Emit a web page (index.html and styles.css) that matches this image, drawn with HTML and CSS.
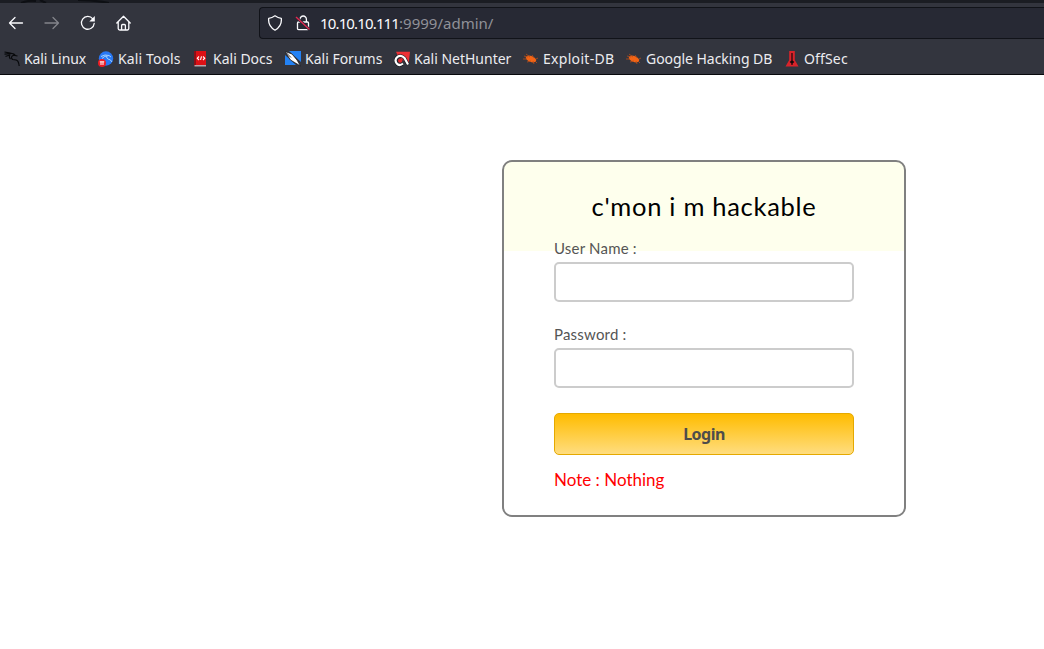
FILE: index.html
```html
<!DOCTYPE html>
<html lang="en">
<head>
<meta charset="utf-8">
<title>Login</title>
<link rel="stylesheet" href="styles.css">
</head>
<body>
<header class="browser">
  <div class="tabstrip"><svg width="130" height="3" viewBox="0 0 130 3"><path d="M21 3Q28 0 36 1M40 0l6 3M78 0q15 0 31 3" stroke="#0d0f13" stroke-width="2" fill="none"/></svg></div>
  <div class="toolbar">
    <nav class="nav">
      <svg viewBox="0 0 16 16"><path d="M14.500 8H1.500M7 2.500L1.500 8 7 13.500" class="line"/></svg>
      <svg viewBox="0 0 16 16" class="dim"><path d="M1 8h13.500M9 2.500L14.500 8 9 13.500" class="line"/></svg>
      <svg viewBox="0 0 16 16"><path d="M12.800 3.800A6.400 6.400 0 1 0 14.200 8.500" class="line"/><path d="M14.800 1v5.500H9.300z" fill="#fbfbfe"/></svg>
      <svg viewBox="0 0 16 16"><path d="M.8 8L7.500 1.200 14.200 8M2.200 7v6.500a1.500 1.500 0 0 0 1.500 1.500h7.600a1.500 1.500 0 0 0 1.500-1.500V7M5.600 15v-4.500q0-1 1-1h1.800q1 0 1 1V15" class="line"/></svg>
    </nav>
    <div class="address">
      <svg viewBox="0 0 16 16"><path d="M8 .8Q11 3 14.300 3.300Q15.200 11 8 15.200Q.8 11 1.700 3.300Q5 3 8 .8z" class="line"/></svg>
      <svg viewBox="0 0 16 16" class="lock"><path d="M5 7V4.200a3.200 3.200 0 0 1 6.400 0V7M3.500 7h9q1 0 1 1v5.500q0 1.200-1.200 1.200H3.700q-1.200 0-1.200-1.200V8q0-1 1-1z" class="line"/><path d="M1 2l13.500 12.500" stroke="#272934" stroke-width="3"/><path d="M1 2l13.500 12.500" stroke="#e22850" stroke-width="1.400"/></svg>
      <span class="url"><span class="host">10.10.10.111</span><span class="path">:9999/admin/</span></span>
    </div>
  </div>
  <div class="bookmarks">
    <div class="bookmark"><svg viewBox="0 0 16 16"><path d="M.5 1l6 1.200M.5 3.200l6-.5M1.500 5.500l4-1.500M6 2.500q4-.5 6 2.500M13.500 5l-4-.8q-3.500 1.800-1 4.300 4.500 0 5.500 2t1.200 4.500M6 3q-1.500 3 .5 5" stroke="#08090b" stroke-width="1.200" fill="none"/></svg><span class="t1">Kali Linux</span></div>
    <div class="bookmark"><svg viewBox="0 0 16 16"><circle cx="8" cy="7.500" r="7.200" fill="#2878f5"/><path d="M3 5.500q4-2.500 8-1l2 1.500M4 7.500q3-3 5-2.500-1 2.500 1 3 3 .5 4 3" stroke="#a4d2ff" stroke-width="1" fill="none"/><circle cx="4" cy="12" r="4" fill="#ed1c24"/><path d="M1.800 10.800h4.400M3 11v3M5 11v3" stroke="#fff" stroke-width="1"/></svg><span class="t2">Kali Tools</span></div>
    <div class="bookmark"><svg viewBox="0 0 16 16"><path d="M1 0h2v15H1z" fill="#8a1017"/><path d="M3 0h10v14H3z" fill="#dc1015"/><path d="M1.500 14.800H13" stroke="#d8c4c8" stroke-width="1.200"/><path d="M6 5.500L4.300 7.200 6 9M8.500 5.300l-1 3.500M10 5.500l1.700 1.700L10 9" stroke="#fff" stroke-width="1.100" fill="none"/></svg><span class="t3">Kali Docs</span></div>
    <div class="bookmark"><svg viewBox="0 0 16 16"><path d="M4 0h12v11zM0 4v10h11z" fill="#2382f5"/><path d="M0 .5L7 3l5 6 3.500 6-5-3-5-3z" fill="#fff" stroke="#111319" stroke-width=".7"/><path d="M1 1.500l5 5" stroke="#111319" stroke-width=".8"/></svg><span class="t4">Kali Forums</span></div>
    <div class="bookmark"><svg viewBox="0 0 16 16"><path d="M2 .8h14L14.500 13 9 9 4 5z" fill="#ed3035"/><path d="M9 12.500Q5.500 15.500 2.700 12.500 0 8.500 3.500 5.800 7.500 3.500 10.500 7l3.500 6.500" stroke="#111319" stroke-width="3.400" fill="none"/><path d="M9 12.500Q5.500 15.500 2.700 12.500 0 8.500 3.500 5.800 7.500 3.500 10.500 7l3.500 6.500" stroke="#fff" stroke-width="2.200" fill="none"/><circle cx="6.200" cy="9.600" r="2.200" fill="#df262c"/></svg><span class="t5">Kali NetHunter</span></div>
    <div class="bookmark"><svg viewBox="0 0 16 16"><ellipse cx="8" cy="8" rx="5.500" ry="2.900" transform="rotate(22 8 8)" fill="#f26415"/><path d="M1 5l4 1M3 3l4 3M0 8h4M4 11l4-1M9 4l2 3M10 10l1 3M12 10l2 2M13 8l2-1" stroke="#b84e1b" stroke-width=".8"/></svg><span class="t6">Exploit-DB</span></div>
    <div class="bookmark"><svg viewBox="0 0 16 16"><ellipse cx="8" cy="8" rx="5.500" ry="2.900" transform="rotate(22 8 8)" fill="#f26415"/><path d="M1 5l4 1M3 3l4 3M0 8h4M4 11l4-1M9 4l2 3M10 10l1 3M12 10l2 2M13 8l2-1" stroke="#b84e1b" stroke-width=".8"/></svg><span class="t7">Google Hacking DB</span></div>
    <div class="bookmark"><svg viewBox="0 0 16 16"><path d="M5.200 0h5.600v9l3.700 6.500h-13L5.200 9z" fill="#d9232a"/><path d="M7.400 2h1.200v7.500l1.700 1.500-1.700 1.500V14H7.400v-1.500L5.700 11l1.700-1.500z" fill="#18080a"/></svg><span class="t8">OffSec</span></div>
  </div>
</header>
<main>
  <form class="login">
    <h2>c'mon i m hackable</h2>
    <label class="user" for="user">User Name :</label>
    <input id="user" type="text">
    <label class="pass" for="pass">Password :</label>
    <input id="pass" type="password">
    <button type="button">Login</button>
    <p class="note"><span>Note : Nothing</span></p>
  </form>
</main>
</body>
</html>
```
FILE: styles.css
```css
* { box-sizing: border-box; }
body { margin: 0; height: 649px; overflow: hidden; background: #fff; font-family: Lato, sans-serif; }
.browser { height: 75px; background: #33353e; border-bottom: 1px solid #08090c; font-family: "Noto Sans", sans-serif; color: #fbfbfe; }
.tabstrip { height: 3px; background: #1b1d23; display: flex; }
.toolbar { height: 40px; display: flex; align-items: center; padding-left: 8px; }
.nav { width: 251px; display: flex; gap: 20px; }
.toolbar svg { width: 16px; height: 16px; flex: none; }
.line { fill: none; stroke: #fbfbfe; stroke-width: 1.3; stroke-linecap: round; stroke-linejoin: round; }
.dim { opacity: .4; }
.address { flex: 1; height: 32px; display: flex; align-items: center; padding-left: 7px; background: #272934; border: 1px solid #111319; border-right: 0; border-radius: 4px 0 0 4px; }
.address .lock { margin-left: 12px; }
.url { margin-left: 9px; font-size: 15px; line-height: 20px; white-space: nowrap; }
.host { letter-spacing: -.85px; }
.path { color: #909198; }
.bookmarks { display: flex; gap: 12px; padding: 5px 0 0 4px; height: 31px; }
.bookmark { display: flex; align-items: center; gap: 4px; height: 22px; font-size: 14px; line-height: 20px; white-space: nowrap; color: #ececf0; }
.bookmark svg { width: 16px; height: 16px; flex: none; }
.t1 { width: 62px; letter-spacing: -.1px; }
.t2 { width: 63px; letter-spacing: .12px; }
.t3 { width: 60px; }
.t4 { width: 77px; }
.t5 { width: 97px; }
.t6 { width: 71px; letter-spacing: .3px; }
.t7 { width: 126px; letter-spacing: -.05px; }
.t8 { width: 44px; letter-spacing: .15px; }
main { padding: 85px 0 0 502px; }
.login { width: 404px; height: 357px; border: 2px solid #808080; border-radius: 10px; padding: 0 50px; display: flex; flex-direction: column; background: #fff linear-gradient(#feffed, #feffed) 0 0 / 100% 89px no-repeat; }
h2 { margin: 27px 0 0; height: 34px; font-size: 25.5px; line-height: 34px; font-weight: 400; letter-spacing: .7px; text-align: center; color: #000; white-space: nowrap; }
label { font-size: 15px; line-height: 20px; height: 20px; color: #555; margin-top: 15px; letter-spacing: .2px; }
.pass { margin-top: 22px; }
input { width: 300px; height: 40px; margin: 4px 0 0; border: 2px solid #ccc; border-radius: 5px; background: #fff; padding: 8px; }
button { height: 42px; margin: 25px 0 0; padding: 0; border: 1px solid #e5a900; border-radius: 5px; background: linear-gradient(#ffbc00, #ffdd7f); color: #4e4d4b; font: bold 16px/40px "Noto Sans", sans-serif; letter-spacing: -.5px; }
.note { margin: 14px 0 0; font-size: 17px; line-height: 22px; color: #f00; }
```
